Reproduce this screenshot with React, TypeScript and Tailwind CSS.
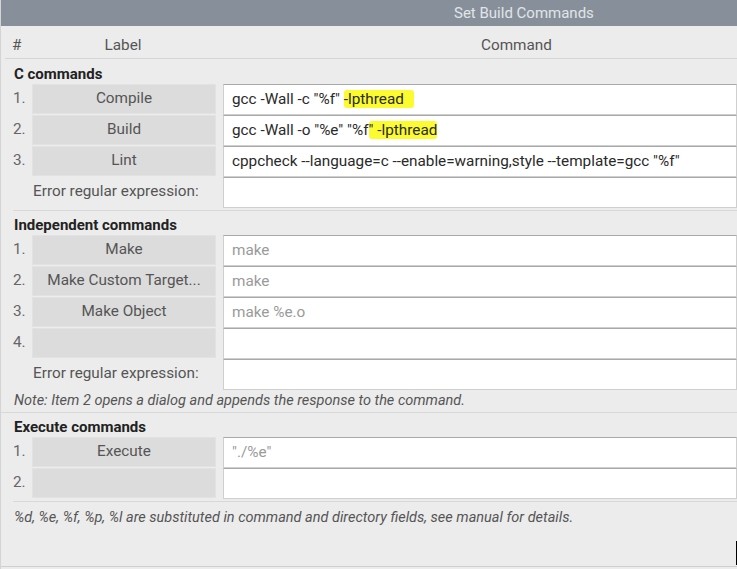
import type { ReactNode } from 'react';

interface CmdRowProps {
  num?: string;
  label?: string;
  value?: ReactNode;
  placeholder?: boolean;
  regex?: boolean;
}

function CmdRow({ num, label, value, placeholder, regex }: CmdRowProps) {
  return (
    <div className="flex h-[31px] items-start">
      {regex ? (
        <div className="w-[215px] h-[30px] flex items-center pl-[32px] text-[#555]">Error regular expression:</div>
      ) : (
        <>
          <div className="w-[31px] h-[30px] flex items-center pl-[12px] text-[#666]">{num}</div>
          <div className="w-[184px] h-[30px] flex items-center justify-center bg-[#dcdcdc] border border-[#e2e2e2] text-[#555]">
            {label}
          </div>
        </>
      )}
      <div
        className={`ml-[7px] flex-1 h-[31px] flex items-center pl-[8px] bg-white border border-[#cfcfcf] border-t-[#a9a9a9] whitespace-pre overflow-hidden ${
          placeholder ? 'text-[#9a9a9a]' : 'text-[#2a2a2a]'
        }`}
      >
        <span>{value}</span>
      </div>
    </div>
  );
}

function SectionTitle({ children, h }: { children: ReactNode; h: string }) {
  return (
    <div className={`${h} shrink-0 flex items-center pt-[5px] pl-[13px] font-bold text-[15px] text-[#222]`}>{children}</div>
  );
}

function Hl({ children }: { children: ReactNode }) {
  return <span className="bg-[#fbfb2f] rounded-[3px] pr-[10px]">{children}</span>;
}

export default function App() {
  return (
    <div
      className="w-[737px] h-[569px] bg-[#ececec] text-[15.3px] leading-none overflow-hidden flex flex-col border-l border-[#d4d4d4]"
      style={{ fontFamily: 'Roboto, "Liberation Sans", sans-serif' }}
    >
      <div className="h-[26px] shrink-0 bg-[#87909a] text-[#e1e5e8] text-[15px] flex items-center pl-[453px]">
        Set Build Commands
      </div>

      {/* column header */}
      <div className="h-[33px] shrink-0 flex items-center pt-[7px] text-[#555] border-b border-[#d6d6d6] ml-[4px]">
        <span className="pl-[7px] w-[26px]">#</span>
        <span className="w-[184px] text-center">Label</span>
        <span className="pl-[266px]">Command</span>
      </div>

      <SectionTitle h="h-[25px]">C commands</SectionTitle>
      <div className="flex flex-col">
        <CmdRow
          num="1."
          label="Compile"
          value={
            <>
              {'gcc -Wall -c "%f" '}
              <Hl>-lpthread</Hl>
            </>
          }
        />
        <CmdRow
          num="2."
          label="Build"
          value={
            <>
              {'gcc -Wall -o "%e" "%f'}
              <span className="bg-[#fbfb2f] rounded-[3px]">{'" -lpthread'}</span>
            </>
          }
        />
        <CmdRow num="3." label="Lint" value={'cppcheck --language=c --enable=warning,style --template=gcc "%f"'} />
        <CmdRow regex />
      </div>

      <div className="h-[3px] shrink-0 ml-[12px] border-b border-[#d8d8d8]" />
      <SectionTitle h="h-[24px]">Independent commands</SectionTitle>
      <div className="flex flex-col">
        <CmdRow num="1." label="Make" value="make" placeholder />
        <CmdRow num="2." label="Make Custom Target..." value="make" placeholder />
        <CmdRow num="3." label="Make Object" value="make %e.o" placeholder />
        <CmdRow num="4." label="" value="" />
        <CmdRow regex />
      </div>
      <div className="h-[23px] shrink-0 flex items-center pl-[13px] italic text-[14.5px] text-[#555] border-b border-[#d8d8d8]">
        Note: Item 2 opens a dialog and appends the response to the command.
      </div>

      <SectionTitle h="h-[24px]">Execute commands</SectionTitle>
      <div className="flex flex-col">
        <CmdRow num="1." label="Execute" value={'"./%e"'} placeholder />
        <CmdRow num="2." label="" value="" />
      </div>
      <div className="h-[3px] shrink-0 ml-[12px] border-b border-[#d8d8d8]" />
      <div className="h-[28px] shrink-0 flex items-center pt-[4px] pl-[13px] italic text-[14.5px] text-[#555]">
        %d, %e, %f, %p, %l are substituted in command and directory fields, see manual for details.
      </div>
      <div className="flex-1 flex justify-end items-end">
        <div className="w-[1px] h-[24px] bg-black mb-[1px]" />
      </div>
      <div className="h-[1px] shrink-0 bg-[#cfcfcf] mb-[2px]" />
    </div>
  );
}
